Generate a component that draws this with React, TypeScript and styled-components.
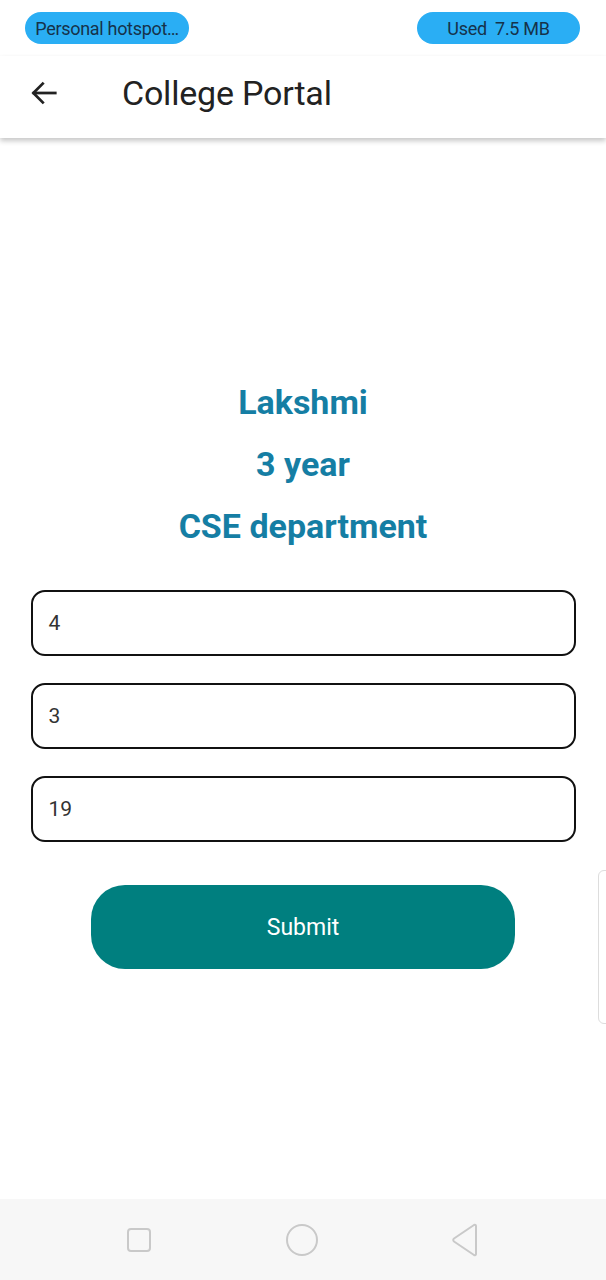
import styled, { createGlobalStyle } from "styled-components";

const GlobalStyle = createGlobalStyle`
  html, body {
    margin: 0;
    padding: 0;
    background: #fff;
    font-family: Roboto, "Noto Sans", sans-serif;
  }
`;

const Screen = styled.div`
  position: relative;
  width: 606px;
  height: 1280px;
  display: flex;
  flex-direction: column;
  background: #fff;
  overflow: hidden;
`;

const StatusBar = styled.div`
  height: 56px;
  padding: 12px 26px 0 25px;
  box-sizing: border-box;
  display: flex;
  justify-content: space-between;
  align-items: flex-start;
`;

const Pill = styled.div<{ $w: number }>`
  width: ${(p) => p.$w}px;
  height: 32px;
  border-radius: 16px;
  background: #2aaef4;
  color: #16324a;
  font-size: 18px;
  letter-spacing: -0.3px;
  display: flex;
  align-items: center;
  justify-content: center;
  white-space: nowrap;
`;

const Header = styled.div`
  height: 82px;
  box-sizing: border-box;
  padding: 0 0 8px 28px;
  display: flex;
  align-items: center;
  box-shadow: 0 3px 5px rgba(0, 0, 0, 0.22);
  position: relative;
  z-index: 1;
`;

const BackBtn = styled.div`
  width: 32px;
  height: 32px;
  display: flex;
  align-items: center;
  justify-content: center;
  margin-right: 62px;
`;

const Title = styled.div`
  font-size: 34px;
  color: #222;
  letter-spacing: -0.2px;
`;

const Body = styled.div`
  flex: 1;
  display: flex;
  flex-direction: column;
  align-items: center;
  padding-top: 233px;
`;

const Info = styled.div`
  font-size: 34px;
  font-weight: 700;
  color: #157ea4;
  line-height: 62px;
  text-align: center;
`;

const Fields = styled.div`
  margin-top: 33px;
  width: 545px;
  display: flex;
  flex-direction: column;
  gap: 27px;
`;

const Field = styled.div`
  height: 66px;
  box-sizing: border-box;
  border: 2px solid #111;
  border-radius: 14px;
  display: flex;
  align-items: center;
  padding-left: 16px;
  font-size: 21px;
  color: #333;
`;

const SubmitButton = styled.button`
  margin-top: 43px;
  width: 424px;
  height: 84px;
  border: none;
  border-radius: 34px;
  background: #007f7f;
  color: #fff;
  font-family: Roboto, sans-serif;
  font-size: 23px;
`;

const EdgeHandle = styled.div`
  position: absolute;
  right: -10px;
  top: 870px;
  width: 16px;
  height: 152px;
  border: 1px solid #ddd;
  border-radius: 6px;
  background: #fff;
`;

const Nav = styled.div`
  height: 81px;
  background: #f7f7f7;
  display: flex;
  align-items: center;
  justify-content: space-between;
  padding: 0 126px;
`;

const fields = ["4", "3", "19"];

export default function App() {
  return (
    <Screen>
      <GlobalStyle />
      <StatusBar>
        <Pill $w={164}>Personal hotspot…</Pill>
        <Pill $w={163}>Used&nbsp; 7.5 MB</Pill>
      </StatusBar>
      <Header>
        <BackBtn>
          <svg width="30" height="30" viewBox="0 0 24 24" fill="none" stroke="#222" strokeWidth="2.2" strokeLinecap="square">
            <path d="M21 12H4" />
            <path d="M11 4.5L3.5 12l7.5 7.5" />
          </svg>
        </BackBtn>
        <Title>College Portal</Title>
      </Header>
      <Body>
        <Info>Lakshmi</Info>
        <Info>3 year</Info>
        <Info>CSE department</Info>
        <Fields>
          {fields.map((f) => (
            <Field key={f}>{f}</Field>
          ))}
        </Fields>
        <SubmitButton>Submit</SubmitButton>
      </Body>
      <EdgeHandle />
      <Nav>
        <svg width="26" height="26" viewBox="0 0 26 26">
          <rect x="2" y="2" width="22" height="22" rx="3" fill="none" stroke="#c9c9c9" strokeWidth="2" />
        </svg>
        <svg width="34" height="34" viewBox="0 0 34 34" style={{ marginLeft: 2 }}>
          <circle cx="17" cy="17" r="15" fill="none" stroke="#c9c9c9" strokeWidth="2" />
        </svg>
        <svg width="30" height="34" viewBox="0 0 30 34">
          <path d="M26 3v28c0 1-1 1.5-2 1L4 18.5c-1-.7-1-2.3 0-3L24 2c1-.5 2 0 2 1z" fill="none" stroke="#c9c9c9" strokeWidth="2" strokeLinejoin="round" />
        </svg>
      </Nav>
    </Screen>
  );
}
